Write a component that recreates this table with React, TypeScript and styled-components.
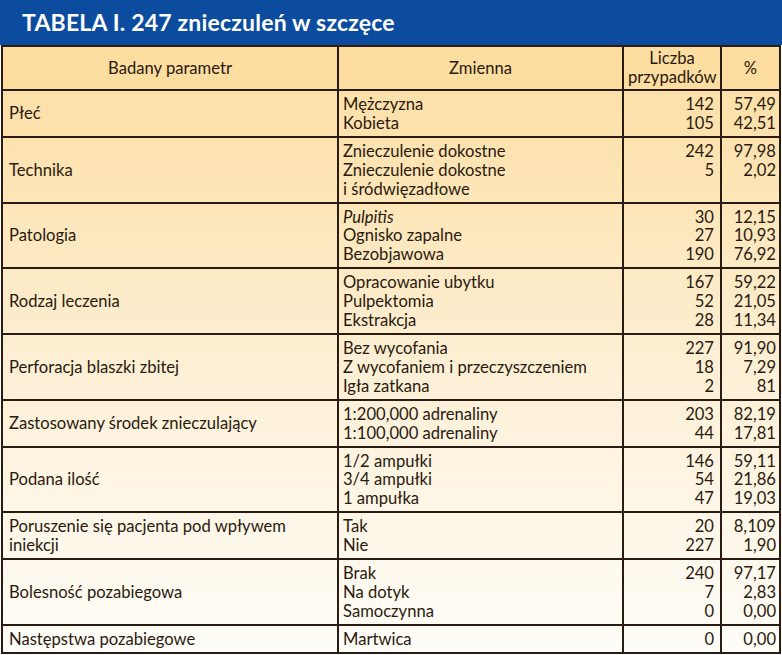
import React from "react";
import styled, { createGlobalStyle } from "styled-components";

type Group = {
  param: string[];
  items: { label: React.ReactNode; count?: string; pct?: string }[];
};

const groups: Group[] = [
  {
    param: ["Płeć"],
    items: [
      { label: "Mężczyzna", count: "142", pct: "57,49" },
      { label: "Kobieta", count: "105", pct: "42,51" },
    ],
  },
  {
    param: ["Technika"],
    items: [
      { label: "Znieczulenie dokostne", count: "242", pct: "97,98" },
      { label: "Znieczulenie dokostne", count: "5", pct: "2,02" },
      { label: "i śródwięzadłowe" },
    ],
  },
  {
    param: ["Patologia"],
    items: [
      { label: <i>Pulpitis</i>, count: "30", pct: "12,15" },
      { label: "Ognisko zapalne", count: "27", pct: "10,93" },
      { label: "Bezobjawowa", count: "190", pct: "76,92" },
    ],
  },
  {
    param: ["Rodzaj leczenia"],
    items: [
      { label: "Opracowanie ubytku", count: "167", pct: "59,22" },
      { label: "Pulpektomia", count: "52", pct: "21,05" },
      { label: "Ekstrakcja", count: "28", pct: "11,34" },
    ],
  },
  {
    param: ["Perforacja blaszki zbitej"],
    items: [
      { label: "Bez wycofania", count: "227", pct: "91,90" },
      { label: "Z wycofaniem i przeczyszczeniem", count: "18", pct: "7,29" },
      { label: "Igła zatkana", count: "2", pct: "81" },
    ],
  },
  {
    param: ["Zastosowany środek znieczulający"],
    items: [
      { label: "1:200,000 adrenaliny", count: "203", pct: "82,19" },
      { label: "1:100,000 adrenaliny", count: "44", pct: "17,81" },
    ],
  },
  {
    param: ["Podana ilość"],
    items: [
      { label: "1/2 ampułki", count: "146", pct: "59,11" },
      { label: "3/4 ampułki", count: "54", pct: "21,86" },
      { label: "1 ampułka", count: "47", pct: "19,03" },
    ],
  },
  {
    param: ["Poruszenie się pacjenta pod wpływem", "iniekcji"],
    items: [
      { label: "Tak", count: "20", pct: "8,109" },
      { label: "Nie", count: "227", pct: "1,90" },
    ],
  },
  {
    param: ["Bolesność pozabiegowa"],
    items: [
      { label: "Brak", count: "240", pct: "97,17" },
      { label: "Na dotyk", count: "7", pct: "2,83" },
      { label: "Samoczynna", count: "0", pct: "0,00" },
    ],
  },
  {
    param: ["Następstwa pozabiegowe"],
    items: [{ label: "Martwica", count: "0", pct: "0,00" }],
  },
];

export default function App() {
  return (
    <Page>
      <GlobalStyle />
      <TitleBar>TABELA I. 247 znieczuleń w szczęce</TitleBar>
      <Table>
        <colgroup>
          <col style={{ width: 336 }} />
          <col style={{ width: 285 }} />
          <col style={{ width: 98 }} />
          <col />
        </colgroup>
        <thead>
          <tr>
            <HeadCell>Badany parametr</HeadCell>
            <HeadCell>Zmienna</HeadCell>
            <HeadCell>
              Liczba
              <br />
              przypadków
            </HeadCell>
            <HeadCell>%</HeadCell>
          </tr>
        </thead>
        <tbody>
          {groups.map((g, i) => (
            <tr key={i}>
              <ParamCell>
                {g.param.map((p, j) => (
                  <Line key={j}>{p}</Line>
                ))}
              </ParamCell>
              <Cell>
                {g.items.map((it, j) => (
                  <Line key={j}>{it.label}</Line>
                ))}
              </Cell>
              <Cell $align="right" $pr={6}>
                {g.items.map((it, j) => (
                  <Line key={j}>{it.count ?? "\u00a0"}</Line>
                ))}
              </Cell>
              <Cell $align="right" $pr={3}>
                {g.items.map((it, j) => (
                  <Line key={j}>{it.pct ?? "\u00a0"}</Line>
                ))}
              </Cell>
            </tr>
          ))}
        </tbody>
      </Table>
    </Page>
  );
}

const GlobalStyle = createGlobalStyle`
  body {
    margin: 0;
    background: #ffffff;
  }
`;

const Page = styled.div`
  width: 782px;
  font-family: Lato, "Open Sans", sans-serif;
  color: #2a1a0e;
`;

const TitleBar = styled.div`
  height: 45px;
  background: #0b4c9e;
  color: #ffffff;
  font-weight: 700;
  font-size: 23px;
  line-height: 44px;
  padding-left: 22px;
  letter-spacing: 0.2px;
`;

const Table = styled.table`
  width: 780px;
  margin-left: 1px;
  border-collapse: collapse;
  table-layout: fixed;
  background: linear-gradient(#fddea3 0%, #fde4b3 20%, #fdf0d7 55%, #fffdf8 100%);
  font-size: 16.6px;
`;

const HeadCell = styled.th`
  border: 2px solid #2a1c12;
  height: 42px;
  padding: 0 4px;
  font-weight: 400;
  text-align: center;
  line-height: 19px;
  background: #fddda0;
`;

const Cell = styled.td<{ $align?: "left" | "right"; $pr?: number }>`
  border: 2px solid #2a1c12;
  padding: 4px ${(p) => p.$pr ?? 4}px 3px 4px;
  text-align: ${(p) => p.$align ?? "left"};
  vertical-align: top;
`;

const ParamCell = styled(Cell)`
  vertical-align: middle;
  padding-left: 6px;
`;

const Line = styled.div`
  line-height: 18.9px;
  white-space: nowrap;
`;
